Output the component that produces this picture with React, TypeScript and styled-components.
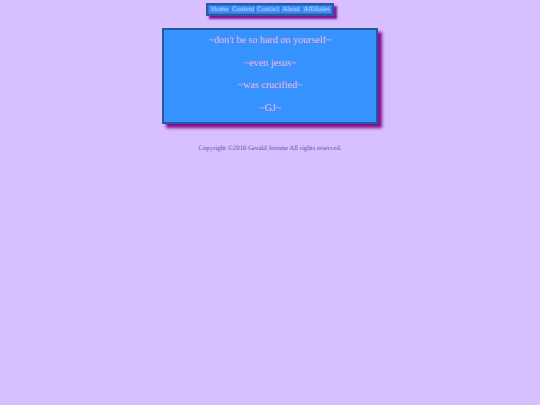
import React from "react";
import styled, { createGlobalStyle } from "styled-components";

const Global = createGlobalStyle`
  html, body { margin: 0; padding: 0; background: #d8bfff; }
  body {
    font-family: "Liberation Serif", serif;
    width: 540px;
    height: 405px;
    overflow: hidden;
    text-rendering: geometricPrecision;
  }
`;
const Page = styled.div`
  display: flex;
  flex-direction: column;
  align-items: center;
  padding-top: 3px;
`;
const Nav = styled.nav`
  display: flex;
  gap: 1px;
  box-sizing: border-box;
  width: 128px;
  height: 13px;
  padding: 1px;
  background: #2f78d8;
  border: 2px solid #2c5aa6;
  box-shadow: 2.5px 2.5px 2px #7a1a96;
`;
const NavItem = styled.a<{ $w: number }>`
  flex: 0 0 ${(p) => p.$w}px;
  text-align: center;
  font-size: 7px;
  line-height: 7px;
  color: #cfd4ff;
  background: #3a90fa;
  white-space: nowrap;
`;
const Card = styled.main`
  box-sizing: border-box;
  width: 216px;
  height: 96px;
  margin-top: 12px;
  padding-top: 4px;
  background: #3592ff;
  border: 2px solid #24599a;
  box-shadow: 4px 4px 3px #80108f;
  display: flex;
  flex-direction: column;
  align-items: center;
  gap: 8.7px;
`;
const Line = styled.p`
  margin: 0;
  font-size: 10.1px;
  line-height: 14px;
  color: #f8b8dc;
`;
const Copy = styled.footer`
  margin-top: 20px;
  font-size: 6.8px;
  line-height: 9px;
  color: #5f55a8;
`;
const links: [string, number][] = [["Home", 21], ["Content", 24], ["Contact", 24], ["About", 20], ["Affiliates", 29]];
const lines = ["~don't be so hard on yourself~", "~even jesus~", "~was crucified~", "~GJ~"];

export default function App() {
  return (
    <Page>
      <Global />
      <Nav>
        {links.map(([t, w]) => <NavItem key={t} $w={w}>{t}</NavItem>)}
      </Nav>
      <Card>
        {lines.map((l) => <Line key={l}>{l}</Line>)}
      </Card>
      <Copy>Copyright ©2016 Gerald Jerome All rights reserved.</Copy>
    </Page>
  );
}
